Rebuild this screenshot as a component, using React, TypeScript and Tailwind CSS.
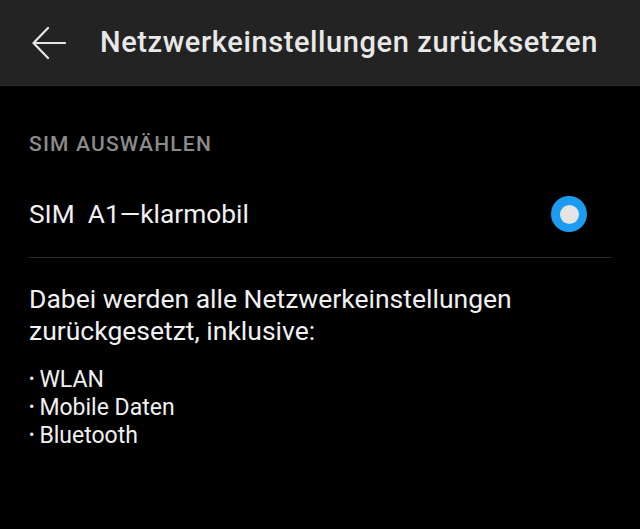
export default function App() {
  return (
    <div className="w-[640px] h-[529px] bg-black overflow-hidden" style={{ fontFamily: 'Roboto, "Noto Sans", sans-serif' }}>
      <div className="h-[86px] bg-[#232323] flex items-center border-b border-[#2c2c2c]">
        <div className="w-[100px] flex items-center pl-[32px]">
          <svg width="34" height="34" viewBox="0 0 34 34" fill="none" stroke="#e6e6e6" strokeWidth="2.2" strokeLinecap="round" strokeLinejoin="round">
            <path d="M33 17H2" />
            <path d="M16 2L1.5 17L16 32" />
          </svg>
        </div>
        <div className="text-[29px] text-[#e8e8e8] font-medium leading-none tracking-[0.6px]">Netzwerkeinstellungen zurücksetzen</div>
      </div>
      <div className="px-[29px] pt-[48px]">
        <div className="text-[21px] font-medium text-[#8b8b8b] leading-none tracking-[1.2px]">SIM AUSWÄHLEN</div>
      </div>
      <div className="mx-[28px] h-[87px] flex items-center justify-between border-b border-[#2a2a2a] mt-[16px]">
        <div className="pl-[1px] text-[26.3px] text-[#f0f0f0] leading-none whitespace-pre">SIM  A1—klarmobil</div>
        <div className="mr-[25px] w-[36px] h-[36px] rounded-full bg-[#1b9cf0] flex items-center justify-center">
          <div className="w-[19px] h-[19px] rounded-full bg-[#e4e4e4]" />
        </div>
      </div>
      <div className="px-[29px] pt-[25px] text-[26.5px] leading-[32px] text-[#f0f0f0]">
        Dabei werden alle Netzwerkeinstellungen zurückgesetzt, inklusive:
      </div>
      <div className="px-[29px] pt-[18px] text-[23px] leading-[27px] text-[#f0f0f0]">
        <div><span className="text-[16px] align-[3px] mr-[5px]">•</span>WLAN</div>
        <div><span className="text-[16px] align-[3px] mr-[5px]">•</span>Mobile Daten</div>
        <div><span className="text-[16px] align-[3px] mr-[5px]">•</span>Bluetooth</div>
      </div>
    </div>
  );
}
